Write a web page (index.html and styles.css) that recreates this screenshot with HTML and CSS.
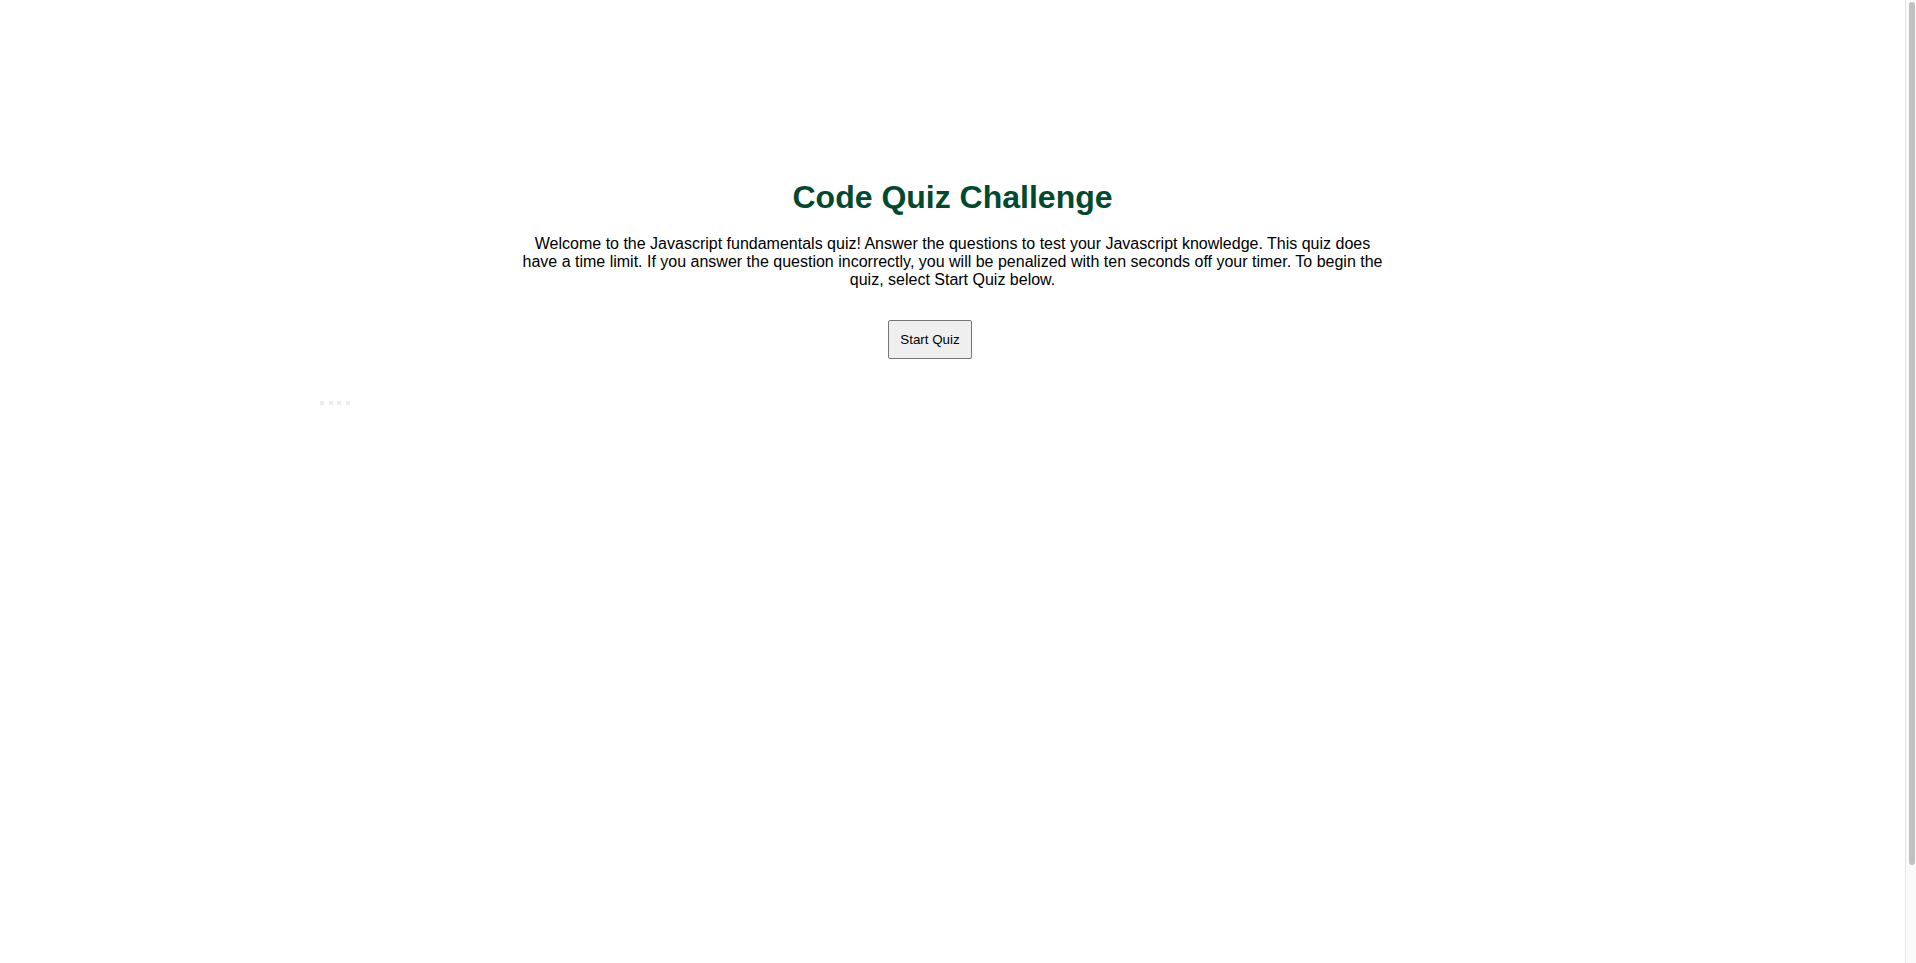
FILE: index.html
```html
<!DOCTYPE html>
<html lang="en">
<head>
<meta charset="utf-8">
<title>Code Quiz</title>
<link rel="stylesheet" href="styles.css">
</head>
<body>
<div class="window">
  <main class="page">
    <section class="intro">
      <h1 class="title">Code Quiz Challenge</h1>
      <p class="lead">Welcome to the Javascript fundamentals quiz! Answer the questions to test your Javascript knowledge. This quiz does have a time limit. If you answer the question incorrectly, you will be penalized with ten seconds off your timer. To begin the quiz, select Start Quiz below.</p>
      <div class="actions">
        <button class="start" type="button">Start Quiz</button>
        <span class="spacer"></span>
      </div>
    </section>
    <ul class="dots">
      <li></li><li></li><li></li><li></li>
    </ul>
  </main>
  <div class="scrollbar" aria-hidden="true">
    <div class="thumb"></div>
  </div>
</div>
</body>
</html>
```
FILE: styles.css
```css
html, body {
  margin: 0;
  height: 100%;
  overflow: hidden;
}
body {
  font-family: "Liberation Sans", Arial, Helvetica, sans-serif;
  color: #000;
  background: #fff;
}
.window {
  display: flex;
  height: 100vh;
}
.page {
  flex: 1;
  min-width: 0;
  padding-top: 179px;
  box-sizing: border-box;
}
.scrollbar {
  flex: none;
  width: 11px;
  border-left: 1px solid #e4e4e4;
  background: #fafafa;
  padding: 2px 1px 0 3px;
  box-sizing: border-box;
}
.thumb {
  height: 863px;
  border-radius: 3px;
  background: #c1c1c1;
}
.intro {
  width: 870px;
  margin: 0 auto;
  text-align: center;
  display: flex;
  flex-direction: column;
  align-items: center;
}
.title {
  margin: 0;
  font-size: 32px;
  font-weight: 700;
  color: #02492f;
  line-height: 37px;
}
.lead {
  margin: 19px 0 0;
  font-size: 16px;
  line-height: 18px;
}
.actions {
  margin-top: 31px;
  display: flex;
  gap: 0;
}
.spacer {
  width: 45px;
}
.start {
  font-family: "Liberation Sans", Arial, sans-serif;
  font-size: 13.33px;
  line-height: 15px;
  padding: 11px 11px;
  border: 1px solid #767676;
  border-radius: 2px;
  background: #efefef;
  color: #000;
}
.dots {
  list-style: none;
  margin: 42px 0 0 320px;
  padding: 0;
  display: flex;
  gap: 4.5px;
}
.dots li {
  width: 4px;
  height: 4px;
  background: #ececec;
}
```
